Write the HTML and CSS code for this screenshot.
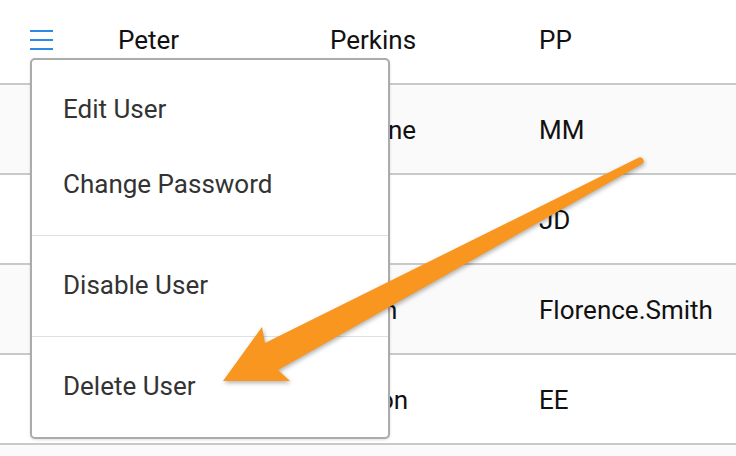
FILE: index.html
```html
<html>
  <head>
    <title>Users</title>
    <link rel="stylesheet" href="styles.css">
  </head>
  <body>
    <div id="main">
      <div class="user-table">
        <div class="row first">
          <div class="cell menu-cell">
            <span class="menu-icon"><i></i><i></i><i></i></span>
          </div>
          <div class="cell">Peter</div>
          <div class="cell">Perkins</div>
          <div class="cell">PP</div>
        </div>
        <div class="row odd">
          <div class="cell menu-cell"></div>
          <div class="cell"></div>
          <div class="cell">Malone</div>
          <div class="cell">MM</div>
        </div>
        <div class="row">
          <div class="cell menu-cell"></div>
          <div class="cell"></div>
          <div class="cell"></div>
          <div class="cell">JD</div>
        </div>
        <div class="row odd">
          <div class="cell menu-cell"></div>
          <div class="cell"></div>
          <div class="cell">Smith</div>
          <div class="cell">Florence.Smith</div>
        </div>
        <div class="row">
          <div class="cell menu-cell"></div>
          <div class="cell"></div>
          <div class="cell">Edison</div>
          <div class="cell">EE</div>
        </div>
        <div class="row odd last"></div>
      </div>

      <div id="user-menu">
        <div class="menu-group first-group">
          <div class="menu-item">Edit User</div>
          <div class="menu-item">Change Password</div>
        </div>
        <div class="menu-group">
          <div class="menu-item">Disable User</div>
        </div>
        <div class="menu-group">
          <div class="menu-item">Delete User</div>
        </div>
      </div>

      <svg id="arrow" width="736" height="456" viewBox="0 0 736 456">
        <path d="M 265 343 L 638 158 A 3.5 3.5 0 0 1 642 164 L 278 370 L 290 381 L 223 381 L 262 327 Z" fill="#f8961f"/>
      </svg>
    </div>
  </body>
</html>
```

FILE: styles.css
```css
body {
  margin: 0;
  font-family: Roboto, "Liberation Sans", sans-serif;
  background-color: #fff;
}
#main {
  position: relative;
  width: 736px;
  height: 456px;
  overflow: hidden;
}
.user-table {
  display: flex;
  flex-direction: column;
}
.row {
  display: grid;
  grid-template-columns: 118px 212px 209px 1fr;
  align-items: center;
  height: 88px;
  border-bottom: 2px solid #c9c9c9;
  font-size: 26px;
  color: #111;
}
.row.first {
  height: 78px;
  padding-bottom: 5px;
}
.row.odd {
  background-color: #fafafa;
}
.row.last {
  border-bottom: none;
}
.cell {
  white-space: nowrap;
  line-height: 30px;
  padding-top: 2px;
}
.menu-cell {
  padding-left: 30px;
}
.menu-icon {
  display: flex;
  flex-direction: column;
  gap: 7px;
  width: 23px;
  margin-top: -1px;
}
.menu-icon i {
  display: block;
  height: 2px;
  background-color: #2b8ae8;
}

#user-menu {
  position: absolute;
  left: 30px;
  top: 58px;
  width: 360px;
  height: 381px;
  box-sizing: border-box;
  border: 2px solid #ababab;
  border-radius: 5px;
  background-color: #fff;
  box-shadow: 0 1px 3px rgba(0, 0, 0, 0.12);
}
.menu-group {
  padding: 12px 0 13px 0;
  border-top: 1px solid #e0e0e0;
}
.menu-group.first-group {
  border-top: none;
}
.menu-item {
  height: 75px;
  line-height: 75px;
  padding-left: 31px;
  font-size: 26px;
  color: #333;
}

#arrow {
  position: absolute;
  left: 0;
  top: 0;
  filter: drop-shadow(1px 2px 2px rgba(0, 0, 0, 0.3));
}
```
